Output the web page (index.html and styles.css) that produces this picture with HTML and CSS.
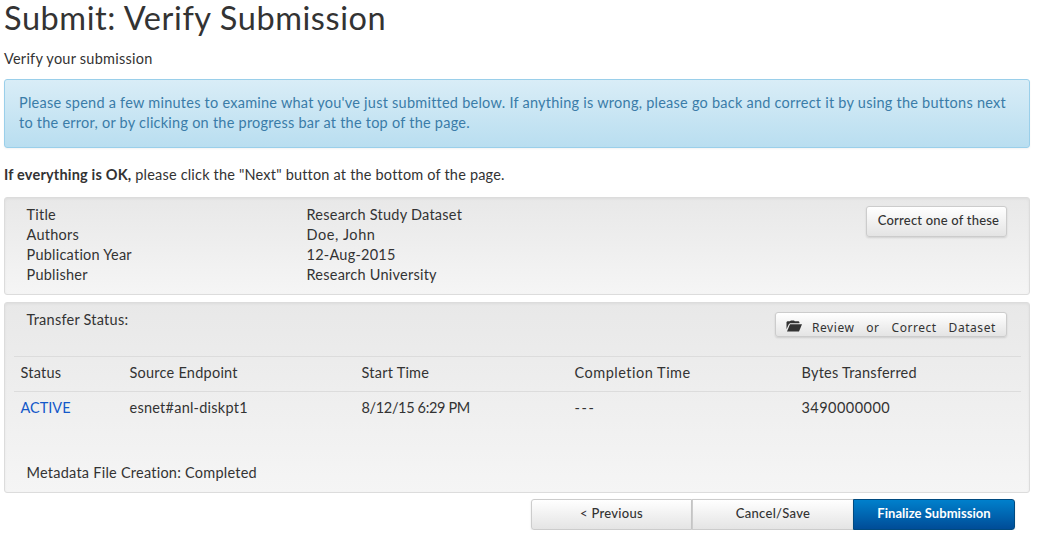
FILE: index.html
```html
<!DOCTYPE html>
<html lang="en">
<head>
<meta charset="utf-8">
<title>Submit: Verify Submission</title>
<link rel="stylesheet" href="styles.css">
</head>
<body>
<main class="page">
  <h1 class="title">Submit: Verify Submission</h1>
  <p class="lead">Verify your submission</p>
  <div class="alert">Please spend a few minutes to examine what you've just submitted below. If anything is wrong, please go back and correct it by using the buttons next<br>to the error, or by clicking on the progress bar at the top of the page.</div>
  <p class="hint"><strong>If everything is OK,</strong> please click the "Next" button at the bottom of the page.</p>

  <section class="well summary">
    <dl class="fields">
      <dt>Title</dt><dd>Research Study Dataset</dd>
      <dt>Authors</dt><dd class="name">Doe, John</dd>
      <dt>Publication Year</dt><dd>12-Aug-2015</dd>
      <dt>Publisher</dt><dd>Research University</dd>
    </dl>
    <button class="btn correct">Correct one of these</button>
  </section>

  <section class="well transfer">
    <div class="transfer-head">
      <span>Transfer Status:</span>
      <button class="btn review">
        <svg class="folder" viewBox="0 0 16 12" width="16" height="12"><path d="M0.5 9.2V2.1L1.4 1.2H3.8L5 0.4H8L8.8 1.2H12.6L13.4 2V3.2H4L2.8 4.2Z" fill="#333"/><path d="M4 4.2H16L13 11.6H1Z" fill="#333"/></svg>
        <span>Review or Correct Dataset</span>
      </button>
    </div>
    <div class="grid head"><span>Status</span><span>Source Endpoint</span><span>Start Time</span><span class="wide">Completion Time</span><span>Bytes Transferred</span></div>
    <div class="grid"><a class="active">ACTIVE</a><span>esnet#anl-diskpt1</span><span class="date">8/12/15 6:29 PM</span><span class="dashes">---</span><span class="bytes">3490000000</span></div>
    <p class="meta">Metadata File Creation: Completed</p>
  </section>

  <div class="actions">
    <button class="btn first">&lt; Previous</button>
    <button class="btn mid">Cancel/Save</button>
    <button class="btn primary">Finalize Submission</button>
  </div>
</main>
</body>
</html>
```
FILE: styles.css
```css
* { box-sizing: border-box; }
body { margin: 0; background: #fff; color: #333; font: 14.5px/20px Lato, "Open Sans", sans-serif; letter-spacing: .24px; white-space: nowrap; }
p, h1, dl, dd { margin: 0; }
.page { width: 1030px; padding-left: 4px; }
.title { font-size: 32.5px; line-height: 35px; font-weight: 400; letter-spacing: .58px; height: 49px; }
.lead { height: 30px; }
.alert { height: 69px; padding: 13px 14px; border: 1px solid #9acfea; border-radius: 3px; background: linear-gradient(#d9edf7, #b9def0); color: #3a7ca8; box-shadow: 0 1px 2px rgba(0,0,0,.05); }
.hint { margin-top: 17px; height: 32px; letter-spacing: .19px; }
.well { border: 1px solid #dcdcdc; border-radius: 3px; background: linear-gradient(#e8e8e8, #f5f5f5); box-shadow: inset 0 1px 3px rgba(0,0,0,.05); }
.summary { height: 98px; display: flex; justify-content: space-between; align-items: flex-start; padding: 7px 22px 0 21.5px; }
.fields { display: grid; grid-template-columns: 280px auto; }
.name { letter-spacing: .6px; }
.btn { font: 500 13px/20px Lato, "Open Sans", sans-serif; letter-spacing: .3px; color: #333; border: 1px solid #ccc; border-radius: 3px; background: linear-gradient(#fff, #e4e4e4); box-shadow: 0 1px 2px rgba(0,0,0,.12); padding: 0; white-space: nowrap; }
.correct { width: 141px; height: 31px; margin-top: 1px; padding: 0 0 3px 4px; letter-spacing: .2px; }
.transfer { margin-top: 7px; height: 191px; padding: 7px 8px 0 9px; }
.transfer-head { display: flex; justify-content: space-between; align-items: flex-start; height: 46px; padding: 0 14px 0 12.5px; }
.review { width: 232px; height: 25px; margin-top: 2px; padding: 6px 0 0 10px; display: flex; align-items: center; gap: 10px; font-family: "Noto Sans", sans-serif; font-weight: 400; font-size: 12px; letter-spacing: .55px; word-spacing: 8.2px; }
.folder { margin-top: -4px; flex: none; }
.grid { display: grid; grid-template-columns: 109px 232px 213px 227px auto; height: 35px; padding: 6px 0 0 6.5px; border-top: 1px solid #dcdcdc; }
.wide { letter-spacing: .5px; }
.date { letter-spacing: -.35px; }
.dashes { letter-spacing: 1.6px; }
.bytes { letter-spacing: .45px; }
.active { color: #1358c9; letter-spacing: 0; }
.meta { margin-top: 37px; padding-left: 12.5px; }
.actions { display: flex; margin: 6px 0 0 527px; }
.actions .btn { height: 31px; padding-bottom: 3px; }
.first { width: 161px; border-radius: 3px 0 0 3px; }
.mid { width: 162px; border-radius: 0; }
.actions .primary { width: 162px; margin-left: -1px; border-radius: 0 3px 3px 0; color: #fff; font-weight: 700; letter-spacing: .05px; border-color: #004a80; background: linear-gradient(#0080cc, #004c97); }
```
